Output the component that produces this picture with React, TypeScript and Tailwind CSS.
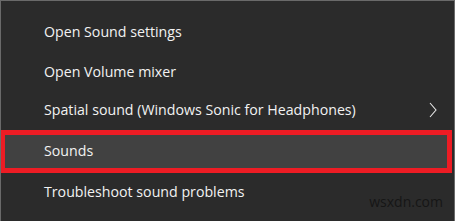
const ITEMS = [
  { label: "Open Sound settings", row: "h-[40px]" },
  { label: "Open Volume mixer", row: "h-[40px]" },
  { label: "Spatial sound (Windows Sonic for Headphones)", row: "h-[40px] -mt-[2px]", submenu: true },
  { label: "Sounds", row: "h-[43px]", highlighted: true },
  { label: "Troubleshoot sound problems", row: "h-[40px] -mt-[1px]" },
];

function Chevron() {
  return (
    <svg width="10" height="18" viewBox="0 0 10 18" className="text-[#e8e8e8]">
      <polyline points="2,2 8,9 2,16" fill="none" stroke="currentColor" strokeWidth="1.1" />
    </svg>
  );
}

export default function App() {
  return (
    <div
      className="relative w-[455px] h-[221px] overflow-hidden bg-[#2b2b2b] text-[#f2f2f2]"
      style={{ fontFamily: '"Open Sans", "Noto Sans", sans-serif' }}
    >
      <div className="absolute inset-0 border-l border-t border-r border-[#6a6a6a] pointer-events-none" />
      <div className="flex flex-col pt-[12px]">
        {ITEMS.map((item) =>
          item.highlighted ? (
            <div
              key={item.label}
              className="flex items-center h-[43px] w-[452px] pl-[39px] bg-[#414141] border-[5px] border-[#ed1c24]"
            >
              <span className="text-[14.2px] leading-none">{item.label}</span>
            </div>
          ) : (
            <div key={item.label} className={`flex items-center pl-[44px] pr-[17px] ${item.row}`}>
              <span className="flex-1 text-[14.2px] leading-none">{item.label}</span>
              {item.submenu && <Chevron />}
            </div>
          )
        )}
      </div>
      <span className="absolute right-[12px] bottom-[9px] text-[14px] text-[#161616]">wsxdn.com</span>
    </div>
  );
}
